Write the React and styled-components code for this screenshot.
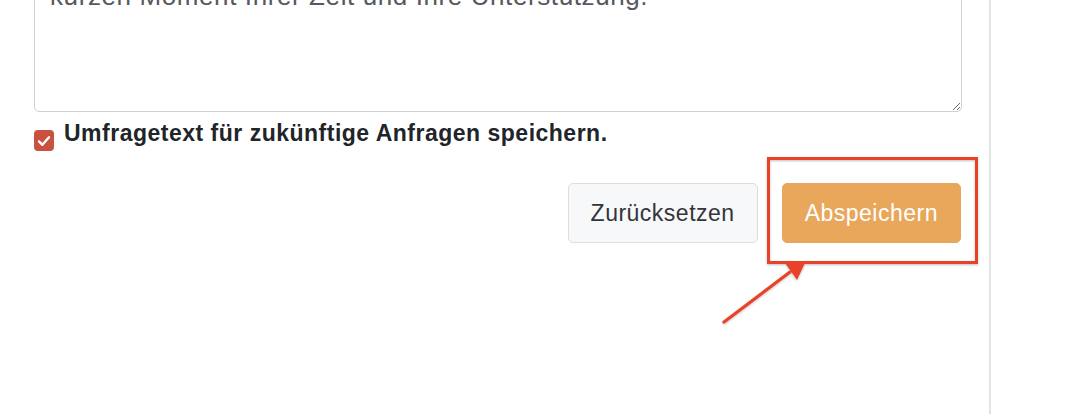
import React from "react";
import styled, { createGlobalStyle } from "styled-components";

const GlobalStyle = createGlobalStyle`
  html, body {
    margin: 0;
    padding: 0;
    background: #ffffff;
    overflow: hidden;
  }
  body {
    font-family: "Liberation Sans", Arial, Helvetica, sans-serif;
  }
`;

const Page = styled.div`
  position: relative;
  display: flex;
  width: 1092px;
  height: 414px;
  overflow: hidden;
`;

const Main = styled.div`
  box-sizing: border-box;
  flex: none;
  width: 991px;
  padding: 0 28px 0 34px;
  border-right: 2px solid #e2e4e7;
  display: flex;
  flex-direction: column;
`;

const Sidebar = styled.div`
  flex: 1;
`;

const TextArea = styled.textarea`
  display: block;
  box-sizing: border-box;
  width: 928px;
  height: 188px;
  margin: -76px 0 0 0;
  padding: 11px 15px 10px;
  border: 1px solid #cdd2d7;
  border-radius: 5px;
  font-family: "Liberation Sans", Arial, sans-serif;
  font-size: 26px;
  letter-spacing: 0.6px;
  line-height: 40px;
  color: #55595e;
  background: #fff;
  resize: vertical;
  overflow: hidden;
  outline: none;
`;

const CheckRow = styled.label`
  display: flex;
  align-items: flex-start;
  gap: 10px;
  margin-top: 8px;
`;

const CheckBox = styled.span`
  flex: none;
  width: 20px;
  height: 21px;
  margin-top: 10px;
  border-radius: 4px;
  background: #c9513f;
  display: flex;
  align-items: center;
  justify-content: center;
`;

const CheckLabel = styled.span`
  font-size: 23px;
  letter-spacing: 0.5px;
  line-height: 27px;
  font-weight: 700;
  color: #212429;
`;

const ButtonRow = styled.div`
  display: flex;
  justify-content: flex-end;
  gap: 24px;
  margin-top: 32px;
`;

const Button = styled.button`
  box-sizing: border-box;
  height: 60px;
  padding: 0 22px;
  border-radius: 5px;
  font-family: "Liberation Sans", Arial, sans-serif;
  font-size: 23px;
  letter-spacing: 0.5px;
  cursor: pointer;
  border: 1px solid ${(p) => (p.$primary ? "#e8a75a" : "#dcdddf")};
  background: ${(p) => (p.$primary ? "#e8a75a" : "#f7f8fa")};
  color: ${(p) => (p.$primary ? "#ffffff" : "#333538")};
`;

const Annotation = styled.svg`
  position: absolute;
  left: 0;
  top: 0;
  pointer-events: none;
`;

export default function App() {
  return (
    <>
      <GlobalStyle />
      <Page>
        <Main>
          <TextArea
            readOnly
            defaultValue={
              "Wir bedanken uns schon jetzt recht herzlich für einen\nkurzen Moment Ihrer Zeit und Ihre Unterstützung."
            }
          />
          <CheckRow>
            <CheckBox>
              <svg width="14" height="12" viewBox="0 0 14 12">
                <path
                  d="M2 6.4 L5.4 9.8 L12 2.2"
                  fill="none"
                  stroke="#fff"
                  strokeWidth="2.4"
                  strokeLinecap="round"
                  strokeLinejoin="round"
                />
              </svg>
            </CheckBox>
            <CheckLabel>Umfragetext für zukünftige Anfragen speichern.</CheckLabel>
          </CheckRow>
          <ButtonRow>
            <Button>Zurücksetzen</Button>
            <Button $primary>Abspeichern</Button>
          </ButtonRow>
        </Main>
        <Sidebar />
        <Annotation width="1092" height="414" viewBox="0 0 1092 414">
          <defs>
            <filter id="sh" x="-10%" y="-10%" width="120%" height="130%">
              <feDropShadow dx="0" dy="1" stdDeviation="1.2" floodColor="#000" floodOpacity="0.25" />
            </filter>
          </defs>
          <g filter="url(#sh)">
            <rect x="768.5" y="158.5" width="208" height="104" fill="none" stroke="#e8432b" strokeWidth="3" />
            <line x1="724" y1="322" x2="790" y2="272" stroke="#e8432b" strokeWidth="3.2" strokeLinecap="round" />
            <polygon points="785,263 806,261 797,280" fill="#e8432b" />
          </g>
        </Annotation>
      </Page>
    </>
  );
}
